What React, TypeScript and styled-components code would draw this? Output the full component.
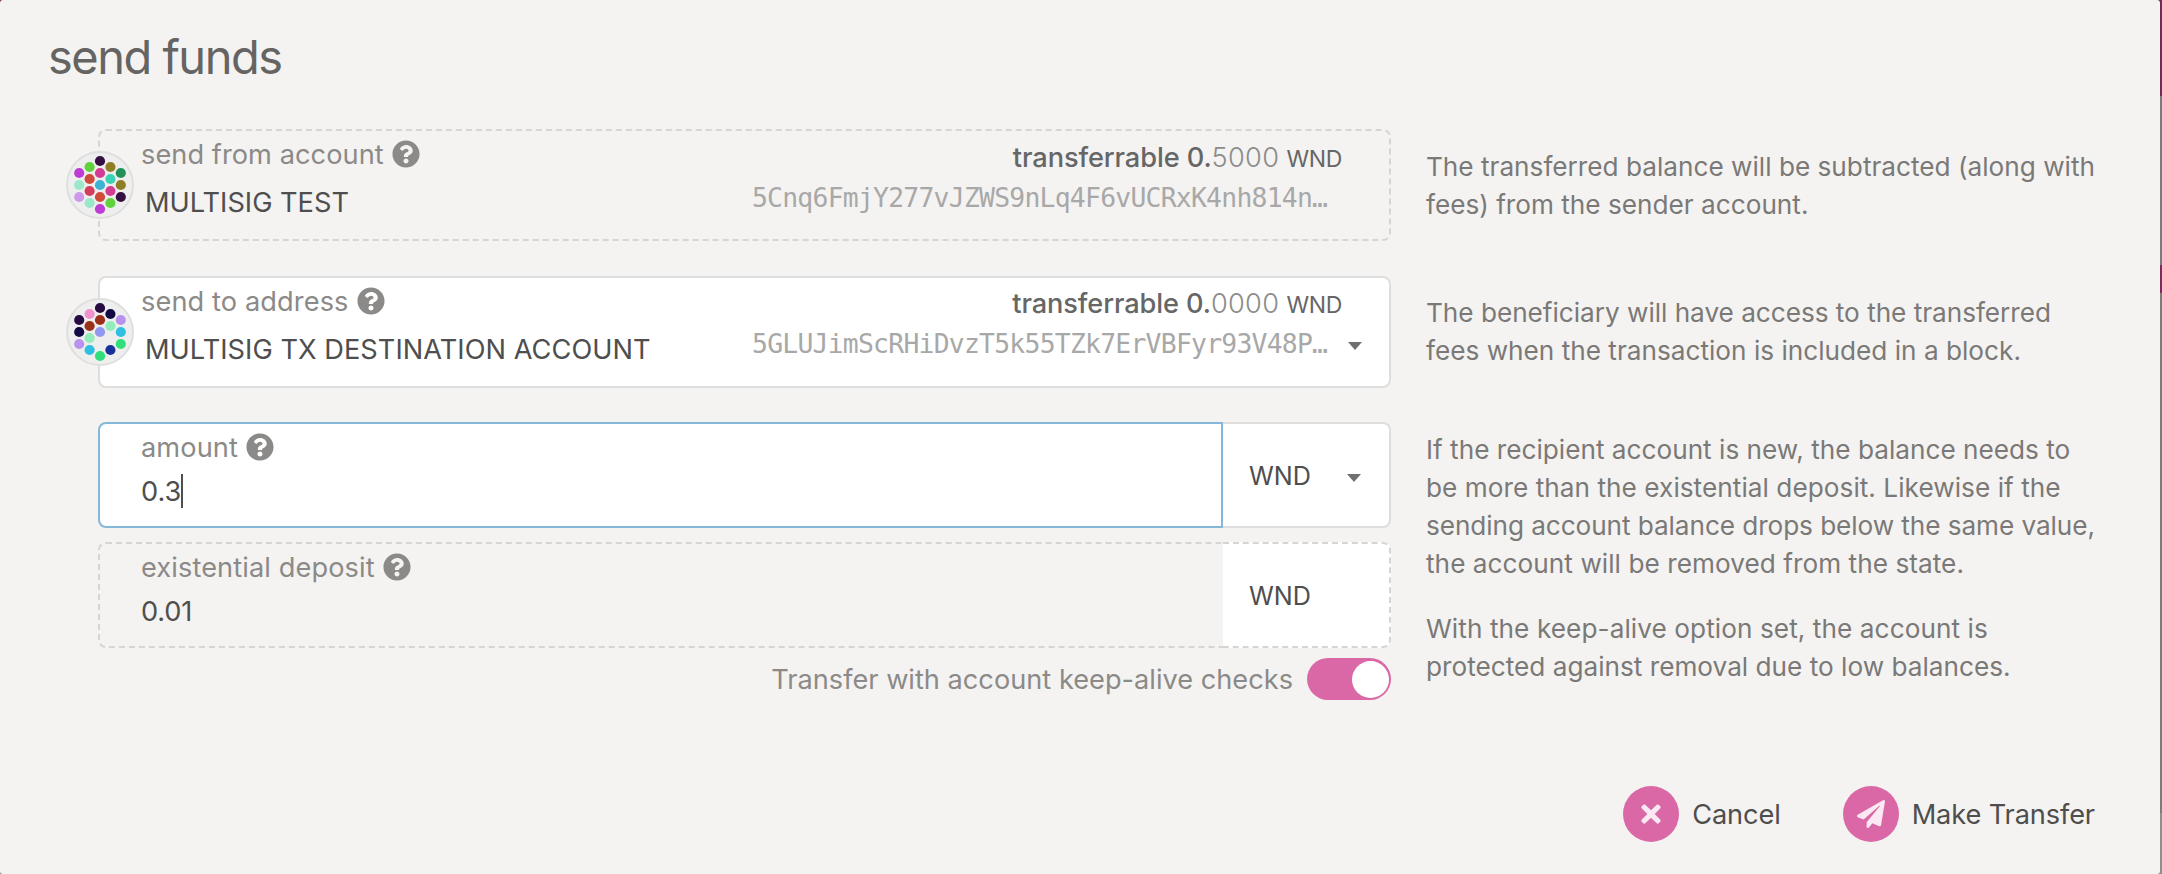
import React from 'react';
import styled, { createGlobalStyle, css } from 'styled-components';
import { FaQuestionCircle, FaTimes, FaPaperPlane } from 'react-icons/fa';

const Global = createGlobalStyle`
  *, *::before, *::after { box-sizing: border-box; }
  body { margin: 0; background: #f4f3f1; }
  button { font: inherit; border: 0; padding: 0; background: none; }
`;

const Backdrop = styled.div`
  width: 2162px;
  height: 874px;
  overflow: hidden;
  background: linear-gradient(
    #6f2d56 0 96px, #7b7b7b 96px 265px, #7a2c5c 265px 293px, #7b7b79 293px 813px, #8e8e8d 813px
  );
  font-family: Inter, 'Liberation Sans', sans-serif;
  font-size: 27.2px;
  color: #4e4e4e;
`;

const Modal = styled.main`
  width: 2160px;
  height: 874px;
  padding: 26px 65px 0 49px;
  border-radius: 3px;
  background: #f4f3f1;
`;

const Title = styled.h1`
  margin: 0 0 0 -1px;
  height: 103px;
  font-size: 47px;
  line-height: 62px;
  font-weight: 400;
  color: #656462;
  letter-spacing: -1.5px;
`;

const Columns = styled.section<{ $height: number }>`
  display: flex;
  height: ${p => p.$height}px;
`;

const FieldColumn = styled.div`
  width: 1293px;
  margin-left: 49px;
  margin-right: 35px;
`;

const HelpColumn = styled.aside<{ $top: number }>`
  padding-top: ${p => p.$top}px;
  white-space: nowrap;
`;

const HelpText = styled.p`
  margin: 0 0 27px;
  font-size: 26.2px;
  line-height: 38px;
  color: #7a7977;
`;

const Line = styled.span<{ $track: number }>`
  display: block;
  letter-spacing: ${p => p.$track}px;
`;

const box = css<{ $disabled?: boolean }>`
  border: 2px ${p => (p.$disabled ? 'dashed #d6d5d3' : 'solid #dedede')};
  border-radius: 8px;
  background: ${p => (p.$disabled ? 'transparent' : '#fff')};
`;

const AccountBox = styled.div<{ $disabled?: boolean }>`
  ${box}
  position: relative;
  display: flex;
  justify-content: space-between;
  height: 112px;
  padding-left: 41px;
`;

const Avatar = styled.svg`
  position: absolute;
  left: -34px;
  top: 20px;
  width: 68px;
  height: 68px;
`;

const Label = styled.label`
  display: flex;
  align-items: center;
  gap: 8px;
  height: 34px;
  margin-top: 6px;
  color: #8b8a88;
  white-space: nowrap;
  svg { width: 28px; height: 28px; }
`;

const Track = styled.span<{ $track: number }>`
  letter-spacing: ${p => p.$track}px;
`;

const AccountName = styled.div<{ $track: number }>`
  margin: 15px 0 0 4px;
  line-height: 34px;
  letter-spacing: ${p => p.$track}px;
  white-space: nowrap;
`;

const AccountSide = styled.div`
  display: flex;
  padding-right: 27px;
`;

const Details = styled.div`
  width: 590px;
`;

const Balance = styled.div<{ $top: number }>`
  margin-top: ${p => p.$top}px;
  line-height: 34px;
  text-align: right;
  color: #666;
  font-weight: 500;
  letter-spacing: -0.1px;
`;

const Decimals = styled.span`
  font-weight: 300;
  color: #8c8c8c;
  letter-spacing: 0.3px;
`;

const Unit = styled.span`
  font-size: 23px;
  font-weight: 400;
  letter-spacing: -0.35px;
`;

const Address = styled.div`
  margin-top: 5px;
  line-height: 34px;
  font-family: 'DejaVu Sans Mono', 'Liberation Mono', monospace;
  font-size: 26.4px;
  letter-spacing: -0.75px;
  color: #a8a8a8;
  white-space: nowrap;
`;

const CaretSlot = styled.div`
  display: flex;
  width: 20px;
  padding-top: 64px;
  justify-content: flex-end;
`;

const Triangle = styled.i<{ $drop?: number }>`
  width: 0;
  height: 0;
  margin-top: ${p => p.$drop ?? 0}px;
  border: 7px solid transparent;
  border-top: 8px solid #707070;
  border-bottom: 0;
`;

const InputRow = styled.div<{ $gap: number }>`
  display: flex;
  height: 106px;
  margin-bottom: ${p => p.$gap}px;
`;

const InputBox = styled.div<{ $disabled?: boolean }>`
  ${box}
  width: 1125px;
  padding-left: 41px;
  border-radius: 8px 0 0 8px;
  ${p => (p.$disabled ? 'border-right: 0;' : 'border-color: #85b7d9;')}
`;

const Value = styled.div`
  display: flex;
  align-items: center;
  height: 34px;
  margin-top: 10px;
`;

const TextCursor = styled.i`
  width: 2px;
  height: 34px;
  background: #4e4e4e;
`;

const UnitBox = styled.div<{ $disabled?: boolean }>`
  ${box}
  display: flex;
  align-items: center;
  justify-content: space-between;
  width: 168px;
  padding: 1px 28px 0 26px;
  border-left: 0;
  border-radius: 0 8px 8px 0;
  background: #fff;
  font-size: 25.2px;
`;

const ToggleRow = styled.div`
  display: flex;
  justify-content: flex-end;
  align-items: center;
  gap: 14px;
  height: 42px;
  color: #8b8a88;
`;

const ToggleLabel = styled.span`
  padding-top: 1px;
`;

const Toggle = styled.button`
  display: flex;
  justify-content: flex-end;
  align-items: center;
  width: 84px;
  height: 42px;
  padding-right: 2px;
  border-radius: 21px;
  background: #db68a6;
`;

const Knob = styled.span`
  width: 37px;
  height: 37px;
  border-radius: 50%;
  background: #fff;
`;

const Actions = styled.footer`
  display: flex;
  justify-content: flex-end;
  gap: 62px;
  padding-top: 86px;
`;

const Action = styled.button`
  display: flex;
  align-items: center;
  gap: 13px;
  height: 56px;
  color: #4e4e4e;
  letter-spacing: -0.12px;
`;

const Disc = styled.span`
  display: flex;
  align-items: center;
  justify-content: center;
  width: 56px;
  height: 56px;
  border-radius: 50%;
  background: #db68a6;
  color: #fae9f2;
`;

// Dot centres in drawing order: columns left to right, each column top to bottom.
const DOTS: [number, number][] = [
  [13.2, 22], [13.2, 34], [13.2, 46],
  [23.6, 16], [23.6, 28], [23.6, 40], [23.6, 52],
  [34, 10], [34, 22], [34, 34], [34, 46], [34, 58],
  [44.4, 16], [44.4, 28], [44.4, 40], [44.4, 52],
  [54.8, 22], [54.8, 34], [54.8, 46],
];

const FROM = [
  '#bd3cd3', '#9ae8c8', '#cd9aea',
  '#60d33c', '#d14b3c', '#d33c5a', '#9ae8c8',
  '#350f3f', '#d33c93', '#3cb4d3', '#d14b3c', '#bd3cd3',
  '#8f7e23', '#3cd3b4', '#d33c93', '#60d33c',
  '#23905a', '#8f7e23', '#350f3f',
];

const TO = [
  '#280b43', '#130943', '#b892ee',
  '#ee92d0', '#9b301a', '#92eeb8', '#2fbfe0',
  '#280b43', '#9b301a', '#9297f0', '', '#2fe07a',
  '#130943', '#92eeb8', '', '#1a309b',
  '#b892ee', '#2fbfe0', '#2fe07a',
];

const Identicon = ({ colors }: { colors: string[] }) => (
  <Avatar viewBox="0 0 68 68">
    <circle cx="34" cy="34" r="33" fill="#eee" stroke="#dfdfdf" strokeWidth="2" />
    {DOTS.map(([x, y], i) => colors[i] && <circle key={i} cx={x} cy={y} r="5.1" fill={colors[i]} />)}
  </Avatar>
);

const FieldLabel = ({ text, track }: { text: string; track: number }) => (
  <Label>
    <Track $track={track}>{text}</Track>
    <FaQuestionCircle />
  </Label>
);

type AccountProps = {
  label: string; labelTrack: number; name: string; nameTrack: number;
  decimals: string; address: string; colors: string[]; disabled?: boolean;
};

const Account = ({ label, labelTrack, name, nameTrack, decimals, address, colors, disabled }: AccountProps) => (
  <AccountBox $disabled={disabled}>
    <Identicon colors={colors} />
    <div>
      <FieldLabel text={label} track={labelTrack} />
      <AccountName $track={nameTrack}>{name}</AccountName>
    </div>
    <AccountSide>
      <Details>
        <Balance $top={disabled ? 10 : 9}>
          transferrable 0.<Decimals>{decimals}</Decimals> <Unit>WND</Unit>
        </Balance>
        <Address>{address}</Address>
      </Details>
      <CaretSlot>{!disabled && <Triangle />}</CaretSlot>
    </AccountSide>
  </AccountBox>
);

const Help = ({ lines }: { lines: [string, number][] }) => (
  <HelpText>
    {lines.map(([text, track]) => <Line key={text} $track={track}>{text}</Line>)}
  </HelpText>
);

export default function App() {
  return (
    <Backdrop>
      <Global />
      <Modal>
        <Title>send funds</Title>
        <Columns $height={147}>
          <FieldColumn>
            <Account
              disabled label="send from account" labelTrack={0.05} name="MULTISIG TEST" nameTrack={0}
              decimals="5000" address="5Cnq6FmjY277vJZWS9nLq4F6vUCRxK4nh814n…" colors={FROM}
            />
          </FieldColumn>
          <HelpColumn $top={19}>
            <Help lines={[['The transferred balance will be subtracted (along with', 0], ['fees) from the sender account.', 0]]} />
          </HelpColumn>
        </Columns>
        <Columns $height={146}>
          <FieldColumn>
            <Account
              label="send to address" labelTrack={0.1} name="MULTISIG TX DESTINATION ACCOUNT" nameTrack={0.04}
              decimals="0000" address="5GLUJimScRHiDvzT5k55TZk7ErVBFyr93V48P…" colors={TO}
            />
          </FieldColumn>
          <HelpColumn $top={18}>
            <Help lines={[['The beneficiary will have access to the transferred', -0.03], ['fees when the transaction is included in a block.', 0]]} />
          </HelpColumn>
        </Columns>
        <Columns $height={278}>
          <FieldColumn>
            <InputRow $gap={14}>
              <InputBox>
                <FieldLabel text="amount" track={0.1} />
                <Value><Track $track={0}>0.3</Track><TextCursor /></Value>
              </InputBox>
              <UnitBox>WND<Triangle $drop={5} /></UnitBox>
            </InputRow>
            <InputRow $gap={10}>
              <InputBox $disabled>
                <FieldLabel text="existential deposit" track={0.1} />
                <Value><Track $track={-0.2}>0.01</Track></Value>
              </InputBox>
              <UnitBox $disabled>WND</UnitBox>
            </InputRow>
            <ToggleRow>
              <ToggleLabel>Transfer with account keep-alive checks</ToggleLabel>
              <Toggle><Knob /></Toggle>
            </ToggleRow>
          </FieldColumn>
          <HelpColumn $top={9}>
            <Help lines={[
              ['If the recipient account is new, the balance needs to', 0],
              ['be more than the existential deposit. Likewise if the', 0.04],
              ['sending account balance drops below the same value,', -0.08],
              ['the account will be removed from the state.', 0.04],
            ]} />
            <Help lines={[
              ['With the keep-alive option set, the account is', 0.07],
              ['protected against removal due to low balances.', 0],
            ]} />
          </HelpColumn>
        </Columns>
        <Actions>
          <Action><Disc><FaTimes size={28} /></Disc>Cancel</Action>
          <Action><Disc><FaPaperPlane size={28} /></Disc>Make Transfer</Action>
        </Actions>
      </Modal>
    </Backdrop>
  );
}
